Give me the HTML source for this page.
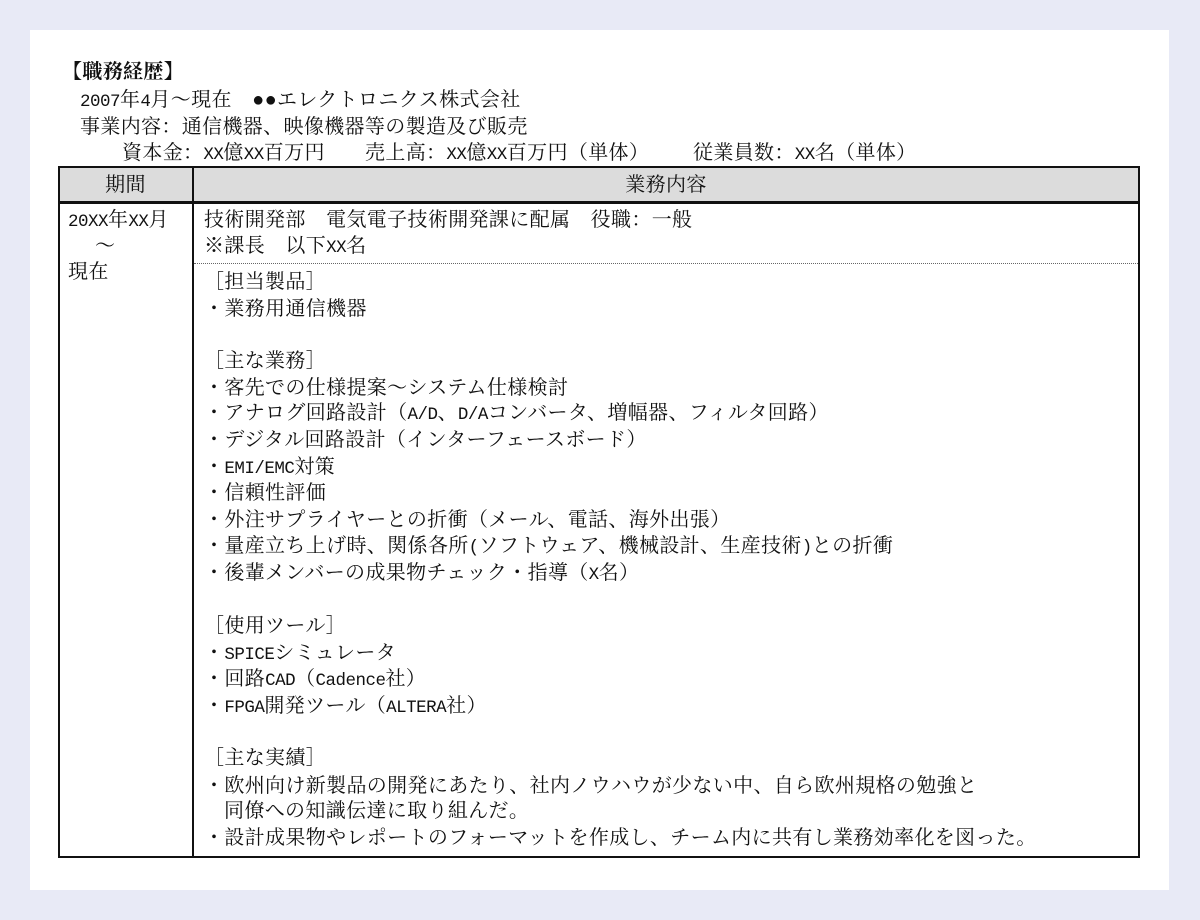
<!DOCTYPE html>
<html><head><meta charset="utf-8"><style>
html,body{margin:0;padding:0}
body{width:1200px;height:920px;background:#e8eaf6;position:relative;overflow:hidden;font-family:"Liberation Serif","Noto Serif CJK SC","Noto Sans CJK JP",serif;font-size:20px;color:#111;letter-spacing:0.35px}
.page{position:absolute;left:30px;top:30px;width:1139px;height:860px;background:#fff}
.t{position:absolute;white-space:nowrap;line-height:26px;height:26px}
.m{font-family:"Liberation Mono","Noto Serif CJK SC",monospace;font-size:17.5px;letter-spacing:-0.5px}
.box{position:absolute;border:2.5px solid #111;box-sizing:border-box}
</style></head><body>
<div class="page"></div>
<div class="box" style="left:58px;top:166px;width:1082px;height:692px"></div>
<div style="position:absolute;left:60px;top:168px;width:1078px;height:33px;background:#dcdcdc"></div>
<div style="position:absolute;left:58px;top:201px;width:1082px;height:2.5px;background:#111"></div>
<div style="position:absolute;left:192px;top:166px;width:1.5px;height:692px;background:#111"></div>
<div style="position:absolute;left:194px;top:263px;width:944px;border-top:1px dotted #666"></div>

<div class="t" style="left:62px;top:59px;font-weight:bold">【職務経歴】</div>
<div class="t" style="left:80px;top:87px"><span class="m">2007</span>年<span class="m">4</span>月～現在　●●エレクトロニクス株式会社</div>
<div class="t" style="left:80px;top:114px">事業内容：通信機器、映像機器等の製造及び販売</div>
<div class="t" style="left:122px;top:140px">資本金：<span class="m">XX</span>億<span class="m">XX</span>百万円</div>
<div class="t" style="left:365px;top:140px">売上高：<span class="m">XX</span>億<span class="m">XX</span>百万円（単体）</div>
<div class="t" style="left:693px;top:140px">従業員数：<span class="m">XX</span>名（単体）</div>

<div class="t" style="left:58px;width:135px;text-align:center;top:172px">期間</div>
<div class="t" style="left:193px;width:946px;text-align:center;top:172px">業務内容</div>

<div class="t" style="left:68px;top:207px"><span class="m">20XX</span>年<span class="m">XX</span>月</div>
<div class="t" style="left:95px;top:233px">～</div>
<div class="t" style="left:68px;top:259px">現在</div>

<div class="t" style="left:204px;top:207px">技術開発部　電気電子技術開発課に配属　役職：一般</div>
<div class="t" style="left:204px;top:233px">※課長　以下<span class="m">XX</span>名</div>
<div class="t" style="left:204px;top:269px">［担当製品］</div>
<div class="t" style="left:204px;top:296px">・業務用通信機器</div>
<div class="t" style="left:204px;top:348px">［主な業務］</div>
<div class="t" style="left:204px;top:375px">・客先での仕様提案～システム仕様検討</div>
<div class="t" style="left:204px;top:400px">・アナログ回路設計（<span class="m">A/D</span>、<span class="m">D/A</span>コンバータ、増幅器、フィルタ回路）</div>
<div class="t" style="left:204px;top:427px">・デジタル回路設計（インターフェースボード）</div>
<div class="t" style="left:204px;top:454px">・<span class="m">EMI/EMC</span>対策</div>
<div class="t" style="left:204px;top:480px">・信頼性評価</div>
<div class="t" style="left:204px;top:507px">・外注サプライヤーとの折衝（メール、電話、海外出張）</div>
<div class="t" style="left:204px;top:533px">・量産立ち上げ時、関係各所<span class="m">(</span>ソフトウェア、機械設計、生産技術<span class="m">)</span>との折衝</div>
<div class="t" style="left:204px;top:560px">・後輩メンバーの成果物チェック・指導（<span class="m">X</span>名）</div>
<div class="t" style="left:204px;top:613px">［使用ツール］</div>
<div class="t" style="left:204px;top:640px">・<span class="m">SPICE</span>シミュレータ</div>
<div class="t" style="left:204px;top:666px">・回路<span class="m">CAD</span>（<span class="m">Cadence</span>社）</div>
<div class="t" style="left:204px;top:693px">・<span class="m">FPGA</span>開発ツール（<span class="m">ALTERA</span>社）</div>
<div class="t" style="left:204px;top:745px">［主な実績］</div>
<div class="t" style="left:204px;top:773px">・欧州向け新製品の開発にあたり、社内ノウハウが少ない中、自ら欧州規格の勉強と</div>
<div class="t" style="left:224px;top:798px">同僚への知識伝達に取り組んだ。</div>
<div class="t" style="left:204px;top:825px">・設計成果物やレポートのフォーマットを作成し、チーム内に共有し業務効率化を図った。</div>
</body></html>
